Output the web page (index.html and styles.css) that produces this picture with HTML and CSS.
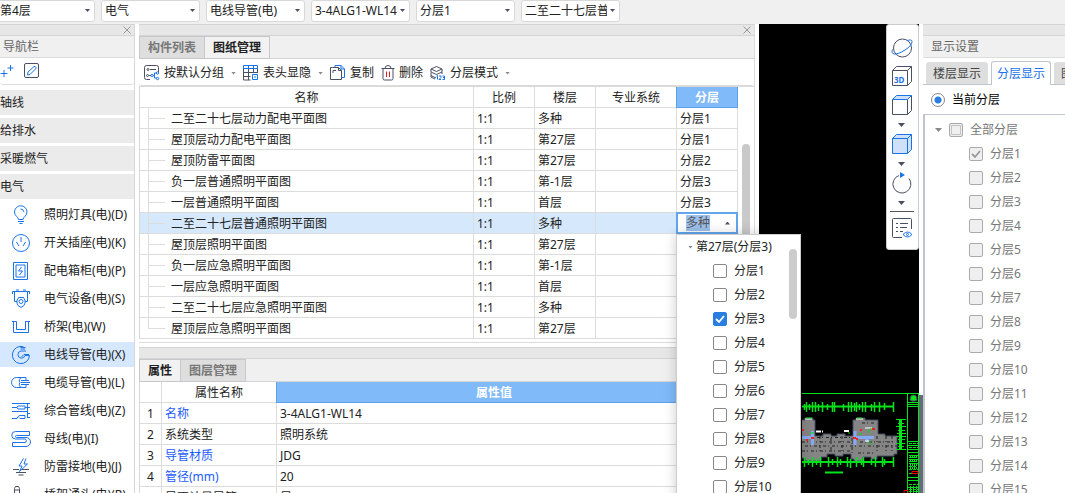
FILE: index.html
```html
<!DOCTYPE html>
<html lang="zh-CN">
<head>
<meta charset="utf-8">
<title>图纸管理</title>
<link rel="stylesheet" href="styles.css">
</head>
<body>
<header class="topbar">
  <span class="pick"><select aria-label="楼层"><option>第4层</option></select></span>
  <span class="pick"><select aria-label="专业"><option>电气</option></select></span>
  <span class="pick"><select aria-label="构件类型"><option>电线导管(电)</option></select></span>
  <span class="pick"><select aria-label="构件"><option>3-4ALG1-WL14</option></select></span>
  <span class="pick"><select aria-label="分层"><option>分层1</option></select></span>
  <span class="pick"><select aria-label="图纸"><option>二至二十七层普通照明平面图</option></select></span>
</header>
<div class="workspace">
  <nav class="nav">
    <div class="strip"><button class="close" aria-label="关闭"><svg width="8" height="8" viewBox="0 0 8 8"><path d="M.5.5l7 7M7.500.5l-7 7"/></svg></button></div>
    <h2 class="panel-title nav-title">导航栏</h2>
    <div class="nav-tools">
      <button aria-label="新建"><svg width="16" height="16" viewBox="0 0 16 16" class="blue"><path d="M4 7v7M.5 10.500h7M10.500 2v6M7.500 5h6"/></svg></button>
      <button aria-label="编辑"><svg width="16" height="16" viewBox="0 0 16 16"><rect x=".5" y=".5" width="14" height="14" rx="1.500"/><path class="b" d="M3.500 12l.5-3 6-5.500q1.500-.5 2 1 .2.800-.5 1.500L6 11.500z"/></svg></button>
    </div>
    <button class="group">轴线</button>
    <button class="group">给排水</button>
    <button class="group">采暖燃气</button>
    <button class="group">电气</button>
    <ul class="items">
      <li><button><svg class="blue" width="20" height="20" viewBox="0 0 20 20"><path d="M7.500 14.500C7.500 12 3.500 11 3.500 7a6 6 0 0 1 12.500 0c0 4-4 5-4 7.500zM7 16.500h6M8.500 18.500h3M9.500 4q3 0 3.500 3"/></svg>照明灯具(电)(D)</button></li>
      <li><button><svg class="blue" width="20" height="20" viewBox="0 0 20 20"><circle cx="10" cy="10" r="8.500"/><path d="M10 4v5M5.500 9l2.500 4M14.500 9L12 13"/></svg>开关插座(电)(K)</button></li>
      <li><button><svg class="blue" width="20" height="20" viewBox="0 0 20 20"><path d="M2.500 1.500h14v17h-14zM5 4h9v12H5zM10.500 6L7.500 10h4l-3 4"/></svg>配电箱柜(电)(P)</button></li>
      <li><button><svg class="blue" width="20" height="20" viewBox="0 0 20 20"><path d="M1.500 5V2.500h17V5M3.500 3v9.500h3M16.500 3v9.500h-3M5 1h3M12 1h3M7 16.500l-1.500-4 2-4h5l2 4-1.500 4-3 2z"/><circle cx="10" cy="12.500" r="2"/></svg>电气设备(电)(S)</button></li>
      <li><button><svg class="blue" width="20" height="20" viewBox="0 0 20 20"><path d="M1 4.500h4.500v8h9v-8H19M2.500 4.500v11h15v-11"/></svg>桥架(电)(W)</button></li>
      <li class="on"><button><svg class="blue" width="20" height="20" viewBox="0 0 20 20"><path d="M12.500 1.800A8.600 8.600 0 1 0 18.500 10.500H14a3.600 3.600 0 1 1-4-4.500h5M9.500 2.500h5M14 4H9.500M18 9.500h-5l-2.500 2.500"/></svg>电线导管(电)(X)</button></li>
      <li><button><svg class="blue" width="20" height="20" viewBox="0 0 20 20"><path d="M10.500 4.500h-5a5 5 0 0 0 0 10h5M15 4.500h-4a3 3 0 0 0-2 5 3 3 0 0 0 2 5h4M10 7.500h8M10 9.500h9M10 11.500h8M15 4.500v3M15 11.500v3"/></svg>电缆导管(电)(L)</button></li>
      <li><button><svg class="blue" width="20" height="20" viewBox="0 0 20 20"><path d="M1 2.500h18M1 6.500h5l1-1.500h7v3H7L6 6.500M14 6.500h5M1 10.500h15M16.500 2.500v14M1 17.500h5q1-3 3-3h5v3H9l-1-1M16 12.500h3M16 16.500h3"/></svg>综合管线(电)(Z)</button></li>
      <li><button><svg class="blue" width="20" height="20" viewBox="0 0 20 20"><path d="M18.500 2.500H4.500a3.500 3.500 0 0 0 0 7.500H14a1.800 1.800 0 0 1 0 3.500H1.500v4H15a4 4 0 0 0 0-9H5.500a1 1 0 0 1 0-2h13z"/></svg>母线(电)(I)</button></li>
      <li><button><svg class="blue" width="20" height="20" viewBox="0 0 20 20"><path d="M12.500 1.500L8 9h3l-2.500 5.500L16.500 7H13l2-5.500"/><path class="g" d="M2 12.500h6M11 12.500h7M5 15.500h10M7.500 18h5"/></svg>防雷接地(电)(J)</button></li>
      <li><button><svg class="blue" width="20" height="20" viewBox="0 0 20 20"><path class="g" d="M3.500 9V3.500L4.500 1.500h3L8.500 3.500V9M4 5h4"/><path d="M1.500 17.500V9.500h9v8"/></svg>桥架通头(电)(R)</button></li>
    </ul>
  </nav>

  <main class="center">
    <section class="drawings">
      <div class="strip"><button class="close" aria-label="关闭"><svg width="8" height="8" viewBox="0 0 8 8"><path d="M.5.5l7 7M7.500.5l-7 7"/></svg></button></div>
      <div class="tabs"><button class="tab">构件列表</button><button class="tab on">图纸管理</button></div>
      <div class="tools">
        <button><svg width="16" height="16" viewBox="0 0 16 16"><path d="M14.500 7V2.500q0-2-2-2h-10q-2 0-2 2v10q0 2 2 2H6M6 4.500h6M5 10.500h2"/><circle cx="4" cy="4.500" r="1"/><circle cx="3.500" cy="10.500" r="1"/><path class="b" d="M9 10.500h1.500M10.500 8v5M10.500 8h2M10.500 13h2"/><circle class="b" cx="8" cy="10.500" r="1.200"/><circle class="b" cx="13.500" cy="8" r="1.200"/><circle class="b" cx="13.500" cy="13.500" r="1.200"/></svg>按默认分组<i class="caret"></i></button>
        <button><svg width="16" height="16" viewBox="0 0 16 16"><path d="M.5 3v12h7M.5 7.500h14M.5 11.500h7M5.500 3v12M10.500 3v5M14.500 3v5"/><path class="b" d="M.5 3.500v-3h14v3zM5.500.5v3M10.500.5v3M9.500 9.500h5v5h-5zM11 12h2"/></svg>表头显隐<i class="caret"></i></button>
        <button><svg width="16" height="16" viewBox="0 0 16 16"><path d="M2.500 2.500H.5v12h10M2.500 2.500h6l3 3v9h-6M8.500 2.500v3h3M3 8V5.500h3"/><path class="b" d="M5 2.500v-2h6l3.500 3.500v8.500h-3M11 .5v3.500h3.500"/></svg>复制</button>
        <button><svg width="14" height="16" viewBox="0 0 14 16"><path d="M.5 3.500h13M4 3.500q0-3 3-3t3 3M2 3.500v10q0 1.500 1.500 1.500h7q1.500 0 1.500-1.500v-10"/><path class="r" d="M5.500 6.500v5.500M8.500 6.500v5.500"/></svg>删除</button>
        <button><svg width="16" height="16" viewBox="0 0 16 16"><path d="M1 4l5.500-2.500L12 4 6.500 6.500zM1 4v3l5.500 2.500L12 7V4M1 7.500v3L6 13M12 7v2M1 10.500v1.500l4 2"/><path class="b" d="M6.500 11l1-.5v4M9 11h2v1.500L9 14.500h2M12.500 11h2v3.500h-2M13 12.500h1.500"/></svg>分层模式<i class="caret"></i></button>
      </div>
      <table class="grid">
        <colgroup><col><col class="w61"><col class="w61"><col class="w81"><col class="w61"><col class="w16"></colgroup>
        <thead><tr><th>名称</th><th>比例</th><th>楼层</th><th>专业系统</th><th class="hot">分层</th><td></td></tr></thead>
        <tbody>
          <tr><td>二至二十七层动力配电平面图</td><td>1:1</td><td>多种</td><td></td><td>分层1</td><td></td></tr>
          <tr><td>屋顶层动力配电平面图</td><td>1:1</td><td>第27层</td><td></td><td>分层1</td><td></td></tr>
          <tr><td>屋顶防雷平面图</td><td>1:1</td><td>第27层</td><td></td><td>分层2</td><td class="track"></td></tr>
          <tr><td>负一层普通照明平面图</td><td>1:1</td><td>第-1层</td><td></td><td>分层3</td><td></td></tr>
          <tr><td>一层普通照明平面图</td><td>1:1</td><td>首层</td><td></td><td>分层3</td><td></td></tr>
          <tr class="sel"><td>二至二十七层普通照明平面图</td><td>1:1</td><td>多种</td><td></td><td class="edit">
            <div class="combo"><input type="text" value="多种" aria-label="分层"><button aria-label="收起"></button></div>
            <div class="popup">
              <div class="popup-head"><i class="caret"></i>第27层(分层3)</div>
              <label><input type="checkbox">分层1</label>
              <label><input type="checkbox">分层2</label>
              <label><input type="checkbox" checked>分层3</label>
              <label><input type="checkbox">分层4</label>
              <label><input type="checkbox">分层5</label>
              <label><input type="checkbox">分层6</label>
              <label><input type="checkbox">分层7</label>
              <label><input type="checkbox">分层8</label>
              <label><input type="checkbox">分层9</label>
              <label><input type="checkbox">分层10</label>
            </div></td><td></td></tr>
          <tr><td>屋顶层照明平面图</td><td>1:1</td><td>第27层</td><td></td><td></td><td></td></tr>
          <tr><td>负一层应急照明平面图</td><td>1:1</td><td>第-1层</td><td></td><td></td><td></td></tr>
          <tr><td>一层应急照明平面图</td><td>1:1</td><td>首层</td><td></td><td></td><td></td></tr>
          <tr><td>二至二十七层应急照明平面图</td><td>1:1</td><td>多种</td><td></td><td></td><td></td></tr>
          <tr class="last"><td>屋顶层应急照明平面图</td><td>1:1</td><td>第27层</td><td></td><td></td><td></td></tr>
        </tbody>
      </table>
    </section>
    <section class="props">
      <div class="strip"></div>
      <div class="tabs"><button class="tab on">属性</button><button class="tab">图层管理</button></div>
      <table class="grid attr">
        <colgroup><col class="w22"><col class="w115"><col><col class="w43"></colgroup>
        <thead><tr><th></th><th>属性名称</th><th class="hot">属性值</th><th></th></tr></thead>
        <tbody>
          <tr><td>1</td><td class="key">名称</td><td>3-4ALG1-WL14</td><td></td></tr>
          <tr><td>2</td><td>系统类型</td><td>照明系统</td><td></td></tr>
          <tr><td>3</td><td class="key">导管材质</td><td>JDG</td><td></td></tr>
          <tr><td>4</td><td class="key">管径(mm)</td><td>20</td><td></td></tr>
          <tr><td></td><td>是否计量导管</td><td>是</td><td></td></tr>
        </tbody>
      </table>
    </section>
  </main>

  <section class="canvas" aria-label="绘图区">
    <svg class="plan" width="117" height="100" viewBox="0 0 117 100">
      <g fill="#858585">
        <path d="M-10 27H3V25h8v2h2v16h8v-2h8v2h6v-2h8v2h8V27h3v-2h9v2h13v14h7v2h12v18h-3v2H75v3h-6v-2h-8v4h-9v-2h-3v-5h-8v2h-8v-2h-8v3h-6v4H3v-3h-13z"/>
      </g>
      <g fill="none" stroke="#222" stroke-dasharray="3 2 1 3"><path d="M0 49h52M3 53h92M0 58h50M58 49h36M15 44.500h34M56 60h18M60 30h12"/><path d="M18 43v18M29 45v14M40 43v17M50 45v16M75 43v17M84 43v15M90 43v15"/></g>
      <path stroke="#86a9f5" stroke-width="3" fill="none" d="M0 44.500h11M10.500 38v14M53 38v14M54 44.500h18M65 45v4"/>
      <path stroke="#e22" stroke-width="2" fill="none" d="M0 37h2M9 45h3M51 45h3M54 46h2M59 36v2M70 36h3M4 47h2"/>
      <path stroke="#fff" stroke-width="2" fill="none" stroke-dasharray="5 1" d="M14 38.500h7M42 38h5"/>
      <path stroke="#fff" fill="none" d="M54 26h7M63 35h7M63 48h4M3 26h7"/>
      <path stroke="#0d0" fill="none" d="M66 40l3-5M4 25h6M55 25h5M8 40h4M68 48v4M46 40h2M57 41h3"/>
      <g stroke="#00e51a" fill="none">
        <path d="M0 .5h117M105.500 0v100M116.500 0v100"/>
        <path stroke-width="2" d="M0 13.500h92M0 69h92M23 79.500h18"/>
        <path stroke-width="3" d="M98.500 27v30"/>
        <path stroke-width="1.500" d="M2.500 11v6M4.500 9v10M7.500 11v6M10.500 9v10M13.500 9v10M16.500 11v7M20.500 9v10M25.500 11v6M30.500 9v10M32.500 9v10M41.500 11v7M46.500 9v10M49.500 9v10M52.500 10v8M54.500 9v10M57.500 11v6M60.500 9v10M63.500 9v10M69.500 11v7M72.500 9v10M77.500 9v10M82.500 10v7M91.500 9v10"/>
        <path stroke-width="1.500" d="M2.500 64v10M6.500 66v6M10.500 64v10M14.500 66v6M18.500 64v10M26.500 64v10M30.500 66v6M35.500 64v10M38.500 66v6M45.500 64v10M48.500 66v9M54.500 64v10M59.500 66v6M61.500 64v10M69.500 66v6M73.500 64v10M80.500 64v10M82.500 66v6M91.500 64v10"/>
        <path d="M94 26.500h10M96 30.500h6M94 33.500h10M96 37.500h7M95 40.500h9M94 43.500h10M96 46.500h7M94 50.500h9M96 53.500h6M94 56.500h10"/>
        <path d="M106 9.500h10M106 11.500h10M106 13.500h10M106 48.500h10M106 52.500h10M106 56.500h10M106 59.500h10M106 84.500h10M106 87.500h10M106 94.500h10"/>
        <path stroke-dasharray="3 1" d="M107 50.500h9M107 54.500h9M107 62.500h9M107 64.500h7M107 66.500h9M107 68.500h8M107 70.500h9M107 73.500h8M107 76.500h9M107 80.500h9M107 91.500h9M107 96.500h9M107 98.500h9"/>
        <path stroke-dasharray="3 1" d="M108.500 62v16M110.500 62v14M112.500 62v15M114.500 62v14M108.500 93v7M111.500 93v7M114.500 93v7"/>
      </g>
      <path fill="#00e51a" d="M108 7q0-5 3.500-5t3.500 5l-2 1h-3z"/>
      <path stroke="#e00" fill="none" d="M110 78.500h6v2h-6zM102 97.500h4v3h-4z"/>
    </svg>
    <div class="viewbar">
      <button aria-label="动态观察"><svg width="22" height="20" viewBox="0 0 22 20"><circle cx="11.500" cy="10" r="9"/><path class="b" d="M16 2.500q5-1.500 5 1 0 4-7 8.500T3 16q-3-1-1.500-4.500"/></svg></button>
      <button aria-label="三维"><svg width="22" height="22" viewBox="0 0 22 22"><path d="M1.500 5.500h15v15h-15zM1.500 5.500l4-4h15l-4 4M20.500 1.500v15l-4 4"/><text x="3" y="18">3D</text></svg></button>
      <button class="drop" aria-label="俯视"><svg width="22" height="22" viewBox="0 0 22 22"><path d="M1.500 5.500v15h15v-15M20.500 1.500v15l-4 4"/><path class="b f" d="M1.500 5.500l4-4h15l-4 4z"/></svg><i></i></button>
      <button class="drop" aria-label="着色"><svg width="22" height="22" viewBox="0 0 22 22"><path class="b f" d="M1.500 5.500l4-4h15v15l-4 4h-15z"/><path class="b" d="M1.500 5.500h15v15M16.500 5.500l4-4"/></svg><i></i></button>
      <button class="drop" aria-label="旋转"><svg width="22" height="22" viewBox="0 0 22 22"><path d="M8 3.500A9 9 0 1 0 18 6.500"/><path class="tip" d="M9 0l5 3-5 3z"/></svg><i></i></button>
      <button class="list" aria-label="显示列表"><svg width="22" height="22" viewBox="0 0 22 22"><path d="M11 20.500H2.500q-1 0-1-1v-17q0-1 1-1h17q1 0 1 1V12M5 6.500h2M9 6.500h8M5 10.500h2M9 10.500h7M5 14.500h2M9 14.500h3"/><path class="b" d="M12 17.500q4.500-5 9 0-4.500 5-9 0z"/><circle class="b" cx="16.500" cy="17.500" r="1"/></svg></button>
    </div>
  </section>
  <div class="rail"></div>

  <aside class="display">
    <div class="strip"></div>
    <h2 class="panel-title">显示设置</h2>
    <div class="dtabs"><button>楼层显示</button><button class="on">分层显示</button><button>图元显示</button></div>
    <label class="mode"><input type="radio" checked>当前分层</label>
    <div class="tree">
      <label class="root"><i class="caret"></i><input type="checkbox" class="part" disabled>全部分层</label>
      <label><input type="checkbox" checked disabled>分层1</label>
      <label><input type="checkbox" disabled>分层2</label>
      <label><input type="checkbox" disabled>分层3</label>
      <label><input type="checkbox" disabled>分层4</label>
      <label><input type="checkbox" disabled>分层5</label>
      <label><input type="checkbox" disabled>分层6</label>
      <label><input type="checkbox" disabled>分层7</label>
      <label><input type="checkbox" disabled>分层8</label>
      <label><input type="checkbox" disabled>分层9</label>
      <label><input type="checkbox" disabled>分层10</label>
      <label><input type="checkbox" disabled>分层11</label>
      <label><input type="checkbox" disabled>分层12</label>
      <label><input type="checkbox" disabled>分层13</label>
      <label><input type="checkbox" disabled>分层14</label>
      <label><input type="checkbox" disabled>分层15</label>
    </div>
  </aside>
</div>
</body>
</html>
```

FILE: styles.css
```css
* { box-sizing: border-box; }
html, body { height: 100%; }
body {
  margin: 0;
  display: flex;
  flex-direction: column;
  overflow: hidden;
  background: #fff;
  color: #222;
  font: 12px/20px "Noto Sans", "Noto Sans CJK SC", sans-serif;
}
button, input, select { font: inherit; color: inherit; margin: 0; }
button { border: 0; padding: 0; background: none; white-space: nowrap; }
svg { flex: none; fill: none; stroke: #4a5064; stroke-width: 1; }
.blue, svg .b { stroke: #1a73e8; }
svg .g { stroke: #4a5064; }
svg .r { stroke: #e02020; }
svg .f { fill: #cfe1fa; }
svg .tip { fill: #1a73e8; stroke: none; }

.caret {
  flex: none;
  width: 5px;
  height: 3px;
  background: #888;
  clip-path: polygon(0 0, 100% 0, 50% 100%);
}

/* top selectors */
.topbar {
  flex: none;
  display: flex;
  gap: 6px;
  height: 24px;
  padding-right: 3px;
  margin-left: -4px;
  background: #f0f0f0;
}
.pick { position: relative; flex: none; width: 99px; height: 22px; }
.pick select {
  appearance: none;
  width: 100%;
  height: 22px;
  padding: 0 12px 0 3px;
  border: 1px solid #d8d8d8;
  border-radius: 3px;
  background: #fff;
}
.pick::after {
  content: "";
  position: absolute;
  right: 5px;
  top: 9px;
  width: 5px;
  height: 3px;
  background: #4a5064;
  clip-path: polygon(0 0, 100% 0, 50% 100%);
}

.workspace { flex: 1; display: flex; min-height: 0; }
.strip {
  flex: none;
  display: flex;
  justify-content: flex-end;
  align-items: center;
  height: 12px;
  padding-right: 3px;
  border-top: 1px solid #d4d4d4;
  border-bottom: 1px solid #d4d4d4;
  background: #e7e7e7;
}
.close { display: flex; }
.close svg { stroke: #999; }
.panel-title {
  flex: none;
  margin: 0;
  height: 22px;
  padding-left: 8px;
  border-bottom: 1px solid #dcdcdc;
  background: #f0f0f0;
  color: #666;
  font-size: 12px;
  font-weight: 400;
  line-height: 22px;
}

/* navigation */
.nav {
  flex: none;
  width: 135px;
  display: flex;
  flex-direction: column;
  overflow: hidden;
  border-right: 1px solid #d8d8d8;
}
.nav-title { padding-left: 3px; }
.nav-tools {
  flex: none;
  display: flex;
  align-items: center;
  gap: 8px;
  height: 27px;
  border-bottom: 1px solid #dcdcdc;
  border-radius: 3px;
  background: #fff;
}
.nav-tools button { display: flex; }
.group {
  flex: none;
  height: 25px;
  margin-bottom: 3px;
  padding-top: 1px;
  background: #ebebeb;
  text-align: left;
}
.nav-tools + .group { margin-top: 5px; }
.items { margin: 0; padding: 0; list-style: none; }
.items li { height: 25px; margin-bottom: 3px; }
.items .on { background: #d5e8ff; }
.items button {
  display: flex;
  align-items: center;
  gap: 13px;
  width: 100%;
  height: 25px;
  padding-left: 11px;
}

/* center column */
.center {
  flex: 616 1 0;
  display: flex;
  flex-direction: column;
  min-width: 0;
  padding: 0 4px;
  position: relative;
  z-index: 1;
}
.drawings { flex: none; border-right: 1px solid #dcdcdc; border-bottom: 1px solid #dcdcdc; padding-bottom: 3px; }
.props { flex: 1; min-height: 0; margin-top: 4px; overflow: hidden; }
.tabs { display: flex; height: 23px; background: #f0f0f0; border-bottom: 1px solid #d4d4d4; }
.tab {
  height: 23px;
  padding: 0 8px;
  border: 1px solid #c8c8cc;
  border-left-width: 0;
  background: #dedede;
  color: #777;
  font-weight: 600;
}
.tab:first-child { border-left-width: 1px; }
.tab.on { background: #f2f2f2; color: #222; }
.tools {
  display: flex;
  align-items: center;
  gap: 7px;
  height: 27px;
  padding-left: 5px;
  padding-top: 2px;
  border-bottom: 1px solid #dcdcdc;
  border-radius: 3px;
}
.tools button { display: flex; align-items: center; gap: 4px; }
.tools .caret { margin-left: 3px; }

/* tables */
.grid { width: 100%; border-collapse: separate; border-spacing: 0; table-layout: fixed; border-left: 1px solid #d8d8d8; }
.drawings .grid { border-top: 1px solid #d8d8d8; }
.grid th, .grid td {
  height: 21px;
  padding: 2px 3px 0;
  border-right: 1px solid #dcdcdc;
  border-bottom: 1px solid #dcdcdc;
  font-weight: 400;
  line-height: 18px;
  text-align: left;
  white-space: nowrap;
}
.grid th { text-align: center; }
.grid th.hot { background: #80baf9; color: #fff; font-weight: 600; box-shadow: -1px 0 #5d9fe8; border-color: #5d9fe8; }
.w61 { width: 61px; }
.w81 { width: 81px; }
.w16 { width: 16px; }
.w22 { width: 22px; }
.w43 { width: 43px; }
.w115 { width: 115px; }
.drawings .grid td:last-child { border: 0; padding: 0; }
.drawings tbody td:first-child {
  padding-left: 31px;
  background:
    linear-gradient(#ddd, #ddd) 8px 0 / 1px 100% no-repeat,
    linear-gradient(#ddd, #ddd) 8px 50% / 17px 1px no-repeat;
}
.drawings tbody .last td:first-child {
  background:
    linear-gradient(#ddd, #ddd) 8px 0 / 1px 50% no-repeat,
    linear-gradient(#ddd, #ddd) 8px 50% / 17px 1px no-repeat;
}
.sel td { background-color: #d5e8fc; }
.drawings tbody .sel td:first-child { background-color: #d5e8fc; }
.grid .sel td:last-child { background: #fff; }
.grid tbody .track { position: relative; }
.track::after {
  content: "";
  position: absolute;
  left: 4px;
  top: -6px;
  width: 8px;
  height: 190px;
  border-radius: 4px;
  background: #c9c9c9;
}
.attr td:first-child { text-align: center; padding-left: 0; padding-right: 0; }
.grid .key { color: #1a5cff; }

/* cell editor */
.grid .edit { position: relative; padding: 0; border: 0; z-index: 2; }
.combo {
  display: flex;
  align-items: center;
  justify-content: space-between;
  height: 22px;
  margin: -1px 0 0 -1px;
  padding: 0 6px 0 8px;
  border: 2px solid #62a5ea;
  background: #fff;
}
.combo input { width: 24px; height: 16px; padding: 0; border: 0; background: #9cc0ec; color: #555; }
.combo button { width: 5px; height: 3px; background: #4a5064; clip-path: polygon(50% 0, 100% 100%, 0 100%); }
.popup {
  position: absolute;
  left: -1px;
  top: 21px;
  width: 125px;
  padding-bottom: 4px;
  border: 1px solid #ccc;
  background: #fff;
  box-shadow: 0 0 12px rgba(0, 0, 0, .2);
}
.popup::after {
  content: "";
  position: absolute;
  right: 3px;
  top: 14px;
  width: 8px;
  height: 70px;
  border-radius: 4px;
  background: #ccc;
}
.popup-head { display: flex; align-items: center; gap: 3px; height: 24px; padding-left: 11px; }
.popup label, .tree label { display: flex; align-items: center; gap: 7px; height: 24px; }
.popup label { padding-left: 36px; }

input[type=checkbox] {
  appearance: none;
  flex: none;
  width: 14px;
  height: 14px;
  border: 1px solid #888;
  border-radius: 2px;
  background: #fff center / 12px 12px no-repeat;
}
input[type=checkbox]:checked {
  border-color: #2a7de1;
  background-color: #2a7de1;
  background-image: url("data:image/svg+xml,%3Csvg xmlns='http://www.w3.org/2000/svg' viewBox='0 0 12 12'%3E%3Cpath d='M2 6l3 3 5-6' fill='none' stroke='white' stroke-width='1.800'/%3E%3C/svg%3E");
}
input[type=checkbox]:disabled { border-color: #aaa; background-color: #efefef; }
input[type=checkbox]:disabled:checked {
  background-image: url("data:image/svg+xml,%3Csvg xmlns='http://www.w3.org/2000/svg' viewBox='0 0 12 12'%3E%3Cpath d='M2 6l3 3 5-6' fill='none' stroke='%23999' stroke-width='1.800'/%3E%3C/svg%3E");
}
input.part { box-shadow: inset 0 0 0 1px #efefef, inset 0 0 0 2px #c4c4c4; }

/* drawing canvas */
.canvas { flex: 160 1 0; position: relative; min-width: 0; overflow: hidden; background: #000; }
.plan { position: absolute; right: 0; bottom: 0; }
.viewbar {
  position: absolute;
  right: 0;
  top: 0;
  display: flex;
  flex-direction: column;
  align-items: center;
  gap: 7px;
  width: 33px;
  padding: 13px 2px 10px 0;
  border: 1px solid #ccc;
  border-radius: 3px;
  background: #fff;
}
.viewbar button { display: flex; flex-direction: column; align-items: center; }
.viewbar .drop i {
  width: 7px;
  height: 4px;
  margin-top: 7px;
  background: #4a5064;
  clip-path: polygon(0 0, 100% 0, 50% 100%);
}
.viewbar .drop { margin-bottom: -1px; }
.viewbar .list { padding: 5px 1px 0; border-top: 1px solid #555; }
.viewbar text { fill: #1a73e8; stroke: none; font-size: 8px; font-weight: 700; }
.rail { flex: none; width: 4px; background: linear-gradient(#fff 371px, #666c78 371px); }

/* display settings */
.display { flex: none; width: 142px; display: flex; flex-direction: column; overflow: hidden; }
.dtabs {
  flex: none;
  display: flex;
  align-items: flex-end;
  gap: 3px;
  height: 27px;
  padding-left: 3px;
  border-bottom: 1px solid #c0c4cc;
}
.dtabs button { flex: none; height: 22px; padding: 2px 7px 0; border-radius: 3px 3px 0 0; background: #dedede; color: #444; }
.dtabs .on {
  height: 24px;
  margin-bottom: -1px;
  padding: 0 5px;
  border: 1px solid #c0c4cc;
  border-bottom: 0;
  background: #fff;
  color: #1a73e8;
}
.mode {
  flex: none;
  display: flex;
  align-items: center;
  gap: 7px;
  height: 30px;
  padding-left: 8px;
  border-bottom: 1px solid #c0c4cc;
  color: #000;
}
.mode input {
  appearance: none;
  width: 14px;
  height: 14px;
  border: 1px solid #888;
  border-radius: 50%;
  background: radial-gradient(circle, #2a7de1 3px, #fff 4px);
}
.tree { flex: 1; min-height: 0; padding-top: 3px; border-left: 2px solid #c0c4cc; color: #777; }
.tree label { padding-left: 44px; }
.tree .root { padding-left: 10px; }
.tree .caret { width: 7px; height: 4px; }
```
